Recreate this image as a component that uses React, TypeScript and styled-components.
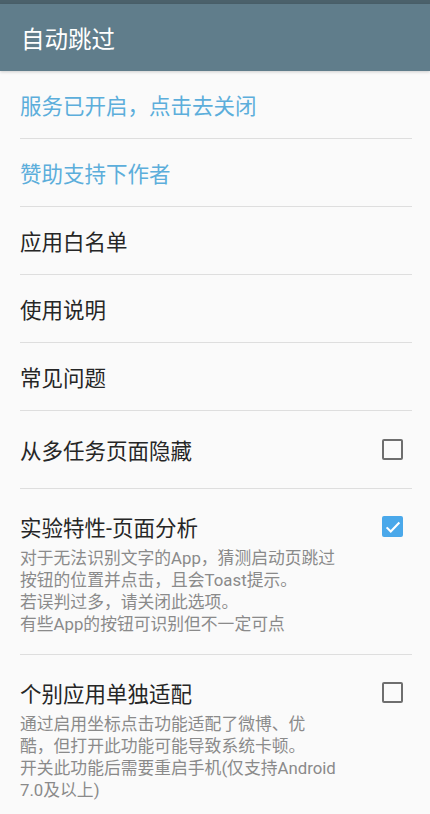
import React from 'react'
import styled, { createGlobalStyle } from 'styled-components'

const GlobalStyle = createGlobalStyle`
  html, body {
    margin: 0;
    padding: 0;
    background: #fafafa;
    overflow: hidden;
  }
  body {
    font-family: Roboto, "Noto Sans CJK SC", sans-serif;
  }
`

const Page = styled.div`
  width: 430px;
  min-height: 814px;
  background: #fafafa;
`

const StatusStrip = styled.div`
  height: 4px;
  background: #4b616b;
`

const Toolbar = styled.header`
  height: 67px;
  display: flex;
  align-items: center;
  padding: 0 21px;
  background: #607d8b;
  box-shadow: 0 1px 3px rgba(0, 0, 0, 0.18);
  position: relative;
  z-index: 1;

  h1 {
    margin: 0;
    font-size: 23.5px;
    font-weight: 400;
    color: #ffffff;
  }
`

const List = styled.div`
  display: flex;
  flex-direction: column;
  padding: 0 18px 0 20px;
`

const Item = styled.div<{ $link?: boolean }>`
  height: 67px;
  display: flex;
  align-items: center;
  border-bottom: 1px solid #dedede;
  font-size: 21.5px;
  color: ${(p) => (p.$link ? '#5caedb' : '#262626')};
`

const CheckItem = styled.div<{ $last?: boolean }>`
  display: flex;
  flex-direction: column;
  padding: ${(p) => (p.$last ? '23px 0 19px' : '24px 0')};
  border-bottom: ${(p) => (p.$last ? 'none' : '1px solid #dedede')};

  &.with-desc {
    padding: 23px 0 19px;
  }
`

const CheckHead = styled.div`
  display: flex;
  align-items: center;
  justify-content: space-between;
  height: 29px;
  font-size: 21.5px;
  color: #262626;
`

const Desc = styled.p`
  margin: 6px 0 0;
  font-size: 16.8px;
  line-height: 22px;
  color: #8a8a8a;
  white-space: pre-line;
`

const Box = styled.span<{ $checked?: boolean }>`
  width: 21px;
  height: 21px;
  box-sizing: border-box;
  margin-right: 9px;
  border-radius: 2px;
  display: flex;
  align-items: center;
  justify-content: center;
  border: ${(p) => (p.$checked ? 'none' : '2.5px solid #6e6e6e')};
  background: ${(p) => (p.$checked ? '#4aa8ea' : 'transparent')};
`

const Checkbox = ({ checked }: { checked?: boolean }) => (
  <Box $checked={checked}>
    {checked && (
      <svg width="18" height="18" viewBox="0 0 24 24">
        <path d="M3.5 12.5l5.5 5.5L20.5 6" fill="none" stroke="#ffffff" strokeWidth="2.8" />
      </svg>
    )}
  </Box>
)

const links = ['服务已开启，点击去关闭', '赞助支持下作者']
const items = ['应用白名单', '使用说明', '常见问题']

export default function App() {
  return (
    <Page>
      <GlobalStyle />
      <StatusStrip />
      <Toolbar>
        <h1>自动跳过</h1>
      </Toolbar>
      <List>
        {links.map((t) => (
          <Item key={t} $link>
            {t}
          </Item>
        ))}
        {items.map((t) => (
          <Item key={t}>{t}</Item>
        ))}
        <CheckItem>
          <CheckHead>
            从多任务页面隐藏
            <Checkbox />
          </CheckHead>
        </CheckItem>
        <CheckItem className="with-desc">
          <CheckHead>
            实验特性-页面分析
            <Checkbox checked />
          </CheckHead>
          <Desc>
            {'对于无法识别文字的App，猜测启动页跳过\n按钮的位置并点击，且会Toast提示。\n若误判过多，请关闭此选项。\n有些App的按钮可识别但不一定可点'}
          </Desc>
        </CheckItem>
        <CheckItem $last>
          <CheckHead>
            个别应用单独适配
            <Checkbox />
          </CheckHead>
          <Desc>
            {'通过启用坐标点击功能适配了微博、优\n酷，但打开此功能可能导致系统卡顿。\n开关此功能后需要重启手机(仅支持Android\n7.0及以上)'}
          </Desc>
        </CheckItem>
      </List>
    </Page>
  )
}
